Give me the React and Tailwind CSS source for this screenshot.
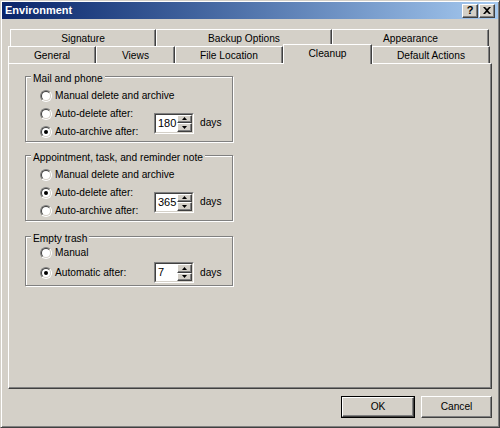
import React from 'react';

const font = { fontFamily: '"Liberation Sans", Arial, sans-serif' };

function Radio({ checked, label }) {
  return (
    <div className="flex h-[18px] items-center">
      <div className="flex h-[12px] w-[12px] items-center justify-center rounded-full border border-t-[#808080] border-l-[#808080] border-b-white border-r-white">
        <div className="flex h-[10px] w-[10px] items-center justify-center rounded-full border border-t-[#404040] border-l-[#404040] border-b-[#d4d0c8] border-r-[#d4d0c8] bg-white">
          {checked && <div className="h-[4px] w-[4px] rounded-full bg-black" />}
        </div>
      </div>
      <span className="ml-[3px] text-[10.2px] text-black">{label}</span>
    </div>
  );
}

function SpinBox({ value }) {
  return (
    <div className="flex h-[21px] w-[40px] border border-t-[#808080] border-l-[#808080] border-b-white border-r-white">
      <div className="flex flex-1 border border-t-[#404040] border-l-[#404040] border-b-[#d4d0c8] border-r-[#d4d0c8] bg-white">
        <span className="flex-1 pl-[2px] pt-[1px] text-[11px] leading-[15px] text-black">{value}</span>
        <div className="flex w-[15px] flex-col">
          <SpinButton up />
          <SpinButton />
        </div>
      </div>
    </div>
  );
}

function SpinButton({ up }) {
  return (
    <div className="flex flex-1 items-center justify-center border border-t-white border-l-white border-b-[#404040] border-r-[#404040] bg-[#d4d0c8] shadow-[inset_-1px_-1px_0_#808080]">
      <svg width="5" height="3" viewBox="0 0 5 3">
        {up ? <path d="M2.5 0 L5 3 L0 3 Z" fill="#000" /> : <path d="M0 0 L5 0 L2.5 3 Z" fill="#000" />}
      </svg>
    </div>
  );
}

function Group({ title, className, children }) {
  return (
    <fieldset className={`w-[208px] border border-[#808080] shadow-[inset_1px_1px_0_#fff,1px_1px_0_#fff] ${className}`}>
      <legend className="ml-[5px] bg-[#d4d0c8] px-[2px] pt-[6px] text-[10.2px] leading-[12px] text-black">{title}</legend>
      {children}
    </fieldset>
  );
}

function Tab({ label, w, selected }) {
  return (
    <div
      className={`flex items-center justify-center border-l border-t border-r border-l-white border-t-white border-r-[#404040] bg-[#d4d0c8] text-[10.2px] text-black shadow-[inset_-1px_0_0_#808080] ${w} ${
        selected ? 'relative z-10 h-[20px] pb-[2px]' : 'mt-[2px] h-[17px] pt-[1px]'
      }`}
    >
      {label}
    </div>
  );
}

export default function App() {
  return (
    <div
      className="h-[428px] w-[500px] overflow-hidden border border-[#404040] border-l-[#d4d0c8] border-t-[#d4d0c8] bg-[#d4d0c8] shadow-[inset_1px_1px_0_#fff,inset_-1px_-1px_0_#808080]"
      style={font}
    >
      {/* title bar */}
      <div className="mx-[1px] mt-[1px] flex h-[17px] items-center justify-between bg-gradient-to-r from-[#0a246a] to-[#a6caf0] pl-[3px] pr-[3px]">
        <span className="text-[11px] font-bold text-white">Environment</span>
        <div className="flex gap-[1px]">
          <div className="flex h-[14px] w-[16px] items-center justify-center border border-t-white border-l-white border-b-[#404040] border-r-[#404040] bg-[#d4d0c8] text-[11px] font-bold leading-none text-black shadow-[inset_-1px_-1px_0_#808080]">
            ?
          </div>
          <div className="flex h-[14px] w-[16px] items-center justify-center border border-t-white border-l-white border-b-[#404040] border-r-[#404040] bg-[#d4d0c8] shadow-[inset_-1px_-1px_0_#808080]">
            <svg width="8" height="7" viewBox="0 0 8 7">
              <path d="M0 0 L2 0 L4 2 L6 0 L8 0 L5 3.5 L8 7 L6 7 L4 5 L2 7 L0 7 L3 3.5 Z" fill="#000" />
            </svg>
          </div>
        </div>
      </div>

      {/* tabs */}
      <div className="ml-[7px] mt-[10px]">
        <div className="ml-[2px] flex h-[17px]">
          {[
            ['Signature', 'w-[146px]'],
            ['Backup Options', 'w-[176px]'],
            ['Appearance', 'w-[157px]'],
          ].map(([l, w]) => (
            <div
              key={l}
              className={`flex h-[17px] items-center justify-center border-l border-t border-r border-l-white border-t-white border-r-[#404040] pt-[1px] text-[10.2px] text-black shadow-[inset_-1px_0_0_#808080] ${w}`}
            >
              {l}
            </div>
          ))}
        </div>
        <div className="-mt-[2px] flex items-start">
          <Tab label="General" w="w-[88px]" />
          <Tab label="Views" w="w-[79px]" />
          <Tab label="File Location" w="w-[108px]" />
          <Tab label="Cleanup" w="w-[89px]" selected />
          <Tab label="Default Actions" w="w-[118px]" />
        </div>

        {/* panel */}
        <div className="-mt-[1px] h-[326px] w-[484px] border border-l-white border-t-white border-r-[#404040] border-b-[#404040] pl-[16px] shadow-[inset_-1px_-1px_0_#808080]">
          <Group title="Mail and phone" className="mt-[3px]">
            <div className="pl-[14px] pt-[2px]">
              <Radio label="Manual delete and archive" />
              <div className="flex items-center">
                <div className="w-[114px]">
                  <Radio label="Auto-delete after:" />
                  <Radio checked label="Auto-archive after:" />
                </div>
                <SpinBox value="180" />
                <span className="ml-[6px] text-[10.2px] text-black">days</span>
              </div>
            </div>
          </Group>

          <Group title="Appointment, task, and reminder note" className="mt-[4px]">
            <div className="pl-[14px] pt-[2px]">
              <Radio label="Manual delete and archive" />
              <div className="flex items-center">
                <div className="w-[114px]">
                  <Radio checked label="Auto-delete after:" />
                  <Radio label="Auto-archive after:" />
                </div>
                <SpinBox value="365" />
                <span className="ml-[6px] text-[10.2px] text-black">days</span>
              </div>
            </div>
          </Group>

          <Group title="Empty trash" className="mt-[6px] pb-[2px]">
            <div className="-mt-[1px] pl-[14px]">
              <Radio label="Manual" />
              <div className="flex items-center">
                <div className="w-[114px]">
                  <Radio checked label="Automatic after:" />
                </div>
                <SpinBox value="7" />
                <span className="ml-[6px] text-[10.2px] text-black">days</span>
              </div>
            </div>
          </Group>
        </div>
      </div>

      {/* buttons */}
      <div className="mt-[7px] flex justify-end gap-[6px] pr-[7px]">
        <div className="h-[22px] w-[74px] border border-black">
          <div className="flex h-full items-center justify-center border border-t-white border-l-white border-b-[#404040] border-r-[#404040] text-[10.2px] text-black shadow-[inset_-1px_-1px_0_#808080]">
            OK
          </div>
        </div>
        <div className="flex h-[22px] w-[71px] items-center justify-center border border-t-white border-l-white border-b-[#404040] border-r-[#404040] text-[10.2px] text-black shadow-[inset_-1px_-1px_0_#808080]">
          Cancel
        </div>
      </div>
    </div>
  );
}
